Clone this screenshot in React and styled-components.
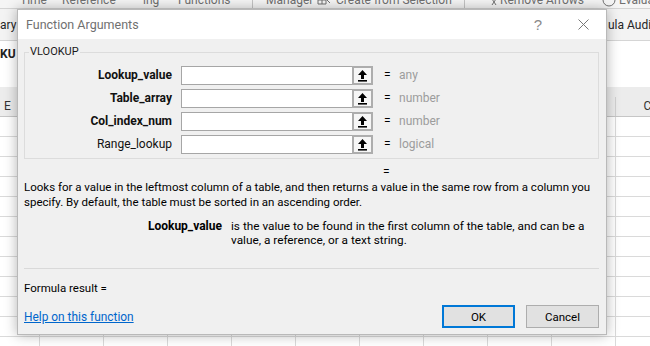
import React from "react";
import styled, { createGlobalStyle } from "styled-components";

const GlobalStyle = createGlobalStyle`
  html, body {
    margin: 0;
    padding: 0;
  }
  body {
    width: 650px;
    height: 346px;
    overflow: hidden;
    background: #fff;
    font-family: Roboto, "Noto Sans", "Liberation Sans", sans-serif;
  }
`;

const Screen = styled.div`
  position: relative;
  width: 650px;
  height: 346px;
  overflow: hidden;
  background: #fff;
`;

/* ---------- excel behind the dialog ---------- */

const TabsStrip = styled.div`
  height: 8px;
  background: #f5f5f5;
  border-bottom: 1px solid #d4d4d4;
  display: flex;
  align-items: flex-end;
  overflow: hidden;
  font-size: 12px;
  color: #707070;
`;

const StripItem = styled.div`
  flex-shrink: 0;
  width: ${(p) => p.$w}px;
  height: 16px;
  line-height: 16px;
  white-space: nowrap;
  display: flex;
  align-items: center;
`;

const StripDivider = styled.div`
  flex-shrink: 0;
  width: ${(p) => p.$w}px;
  height: 8px;
  border-left: 1px solid #c4c4c4;
  align-self: stretch;
`;

const RibbonBody = styled.div`
  height: 31px;
  background: #f3f3f3;
  border-bottom: 1px solid #d5d5d5;
  display: flex;
  align-items: center;
  justify-content: space-between;
  font-size: 12px;
  color: #262626;
`;

const RibbonText = styled.span`
  width: ${(p) => p.$w}px;
  overflow: hidden;
  white-space: nowrap;
`;

const FormulaRow = styled.div`
  height: 46px;
  box-sizing: border-box;
  padding-top: 5px;
  font-size: 12px;
  font-weight: 700;
  line-height: 16px;
  color: #222;
`;

const HeaderBand = styled.div`
  height: 30px;
  box-sizing: border-box;
  padding-top: 10px;
  background: #ececec;
  border-bottom: 1px solid #c6c6c6;
  overflow: hidden;
`;

const Track = styled.div`
  display: flex;
  margin-left: -24px;
  height: 100%;
`;

const HeadCell = styled.div`
  flex-shrink: 0;
  width: 64px;
  box-sizing: border-box;
  border-right: 1px solid #d0d0d0;
  text-align: center;
  font-size: 12px;
  line-height: 19px;
  color: #333;
`;

const SheetRow = styled.div`
  height: 20px;
  box-sizing: border-box;
  border-bottom: 1px solid #dadada;
  overflow: hidden;
`;

const SheetCell = styled.div`
  flex-shrink: 0;
  width: 64px;
  box-sizing: border-box;
  border-right: 1px solid #dadada;
`;

/* ---------- dialog ---------- */

const Dialog = styled.div`
  position: absolute;
  left: 17px;
  top: 9px;
  width: 590px;
  box-sizing: border-box;
  background: #f0f0f0;
  border: 1px solid #b9b9b9;
  box-shadow: 0 0 12px rgba(0, 0, 0, 0.3);
  color: #000;
`;

const TitleBar = styled.div`
  height: 29px;
  display: flex;
  align-items: center;
  background: #fff;
`;

const Title = styled.div`
  flex: 1;
  padding-left: 8px;
  font-size: 12.5px;
  color: #707070;
`;

const CaptionButton = styled.div`
  width: ${(p) => p.$w}px;
  height: 29px;
  display: flex;
  align-items: center;
  justify-content: center;
  font-family: "Liberation Sans", sans-serif;
  font-size: 15px;
  color: #8a8a8a;
`;

const Body = styled.div`
  padding: 0 7px 6px 6px;
  font-size: 11.5px;
`;

const ArgsBox = styled.fieldset`
  margin: 5px 0 0;
  padding: 6px 4px 4px;
  border: 1px solid #dcdcdc;
  min-width: 0;
`;

const BoxLegend = styled.legend`
  padding: 0 1px;
  font-size: 11px;
  line-height: 16px;
  color: #1a1a1a;
`;

const ArgGrid = styled.div`
  display: grid;
  grid-template-columns: 143px 192px 1fr;
  column-gap: 9px;
  row-gap: 4px;
`;

const ArgLabel = styled.div`
  text-align: right;
  font-size: 12px;
  line-height: 19px;
  font-weight: ${(p) => (p.$required ? 700 : 400)};
  color: #111;
`;

const RefInput = styled.div`
  display: flex;
  height: 19px;
`;

const Field = styled.input`
  flex: 1;
  min-width: 0;
  margin: 0;
  padding: 0 3px;
  box-sizing: border-box;
  height: 19px;
  border: 1px solid #a6a6a6;
  border-right: none;
  background: #fff;
  outline: none;
`;

const RefButton = styled.div`
  width: 21px;
  height: 19px;
  box-sizing: border-box;
  border: 2px solid #adadad;
  background: #f6f6f6;
  display: flex;
  align-items: center;
  justify-content: center;
`;

const ArgResult = styled.div`
  display: grid;
  grid-template-columns: 17px auto;
  font-size: 12px;
  line-height: 19px;
`;

const Eq = styled.span`
  padding-left: 2px;
  color: #000;
`;

const ArgType = styled.span`
  color: #9c9c9c;
`;

const ResultLine = styled.div`
  padding: 5px 0 0 359px;
  font-size: 12px;
  line-height: 16px;
`;

const Description = styled.p`
  margin: 0;
  line-height: 15px;
  white-space: nowrap;
`;

const ArgHelp = styled.div`
  margin-top: 9px;
  display: grid;
  grid-template-columns: 198px 1fr;
  column-gap: 9px;
  line-height: 14px;
`;

const ArgHelpName = styled.div`
  text-align: right;
  font-size: 12px;
  font-weight: 700;
`;

const ArgHelpText = styled.div`
  white-space: nowrap;
  font-size: 11.8px;
`;

const Separator = styled.div`
  margin-top: 21px;
  height: 1px;
  background: #d9d9d9;
`;

const FormulaResult = styled.div`
  margin-top: 11px;
  line-height: 16px;
`;

const Footer = styled.div`
  margin-top: 9px;
  display: flex;
  align-items: center;
  gap: 11px;
`;

const HelpLink = styled.a`
  flex: 1;
  color: #0066cc;
  text-decoration: underline;
  font-size: 11.9px;
  cursor: pointer;
`;

const DialogButton = styled.button`
  width: 73px;
  height: 23px;
  box-sizing: border-box;
  margin: 0;
  padding: 0;
  background: #e1e1e1;
  border: ${(p) => (p.$default ? "2px solid #0078d7" : "1px solid #adadad")};
  font-family: inherit;
  font-size: 11.5px;
  color: #000;
`;

const UpArrow = () => (
  <svg width="9" height="12" viewBox="0 0 9 12">
    <path d="M4.5 0 L9 5 H6 V9 H3 V5 H0 Z" fill="#000" />
    <rect x="0" y="10" width="9" height="1.6" fill="#000" />
  </svg>
);

const CloseGlyph = () => (
  <svg width="11" height="11" viewBox="0 0 11 11">
    <path d="M0.5 0.5 L10.5 10.5 M10.5 0.5 L0.5 10.5" stroke="#777" strokeWidth="1" />
  </svg>
);

const SmallIcon = ({ kind }) => (
  <svg width="14" height="14" viewBox="0 0 14 14">
    {kind === "grid" && (
      <path d="M1 3h8v8H1z M1 7h8 M5 3v8 M9 6l4 4" fill="none" stroke="#707070" strokeWidth="1" />
    )}
    {kind === "arrows" && (
      <path d="M1 2l5 5 M6 2l-5 5 M9 6l4 6 M13 6l-4 6" fill="none" stroke="#707070" strokeWidth="1" />
    )}
    {kind === "eval" && (
      <circle cx="7" cy="7" r="6" fill="none" stroke="#707070" strokeWidth="1" />
    )}
  </svg>
);

const args = [
  { name: "Lookup_value", type: "any", required: true },
  { name: "Table_array", type: "number", required: true },
  { name: "Col_index_num", type: "number", required: true },
  { name: "Range_lookup", type: "logical", required: false },
];

const headers = ["E", "", "", "", "", "", "", "", "", "", "C"];
const rows = Array.from({ length: 12 }, (_, i) => i);

export default function App() {
  return (
    <Screen>
      <GlobalStyle />

      <TabsStrip>
        <StripItem $w={20} />
        <StripItem $w={42}>Time</StripItem>
        <StripItem $w={81}>Reference</StripItem>
        <StripItem $w={35}>ing</StripItem>
        <StripItem $w={74}>Functions</StripItem>
        <StripDivider $w={13} />
        <StripItem $w={51}>Manager</StripItem>
        <StripItem $w={19}>
          <SmallIcon kind="grid" />
        </StripItem>
        <StripItem $w={128}>Create from Selection</StripItem>
        <StripDivider $w={18} />
        <StripItem $w={17}>
          <SmallIcon kind="arrows" />
        </StripItem>
        <StripItem $w={102}>Remove Arrows</StripItem>
        <StripItem $w={17}>
          <SmallIcon kind="eval" />
        </StripItem>
        <StripItem $w={60}>Evaluate Formula</StripItem>
      </TabsStrip>

      <RibbonBody>
        <RibbonText $w={17}>ary</RibbonText>
        <RibbonText $w={42}>ula Auditing</RibbonText>
      </RibbonBody>

      <FormulaRow>KU</FormulaRow>

      <HeaderBand>
        <Track>
          {headers.map((h, i) => (
            <HeadCell key={i}>{h}</HeadCell>
          ))}
        </Track>
      </HeaderBand>

      {rows.map((r) => (
        <SheetRow key={r}>
          <Track>
            {headers.map((_, i) => (
              <SheetCell key={i} />
            ))}
          </Track>
        </SheetRow>
      ))}

      <Dialog>
        <TitleBar>
          <Title>Function Arguments</Title>
          <CaptionButton $w={44}>?</CaptionButton>
          <CaptionButton $w={46}>
            <CloseGlyph />
          </CaptionButton>
        </TitleBar>

        <Body>
          <ArgsBox>
            <BoxLegend>VLOOKUP</BoxLegend>
            <ArgGrid>
              {args.map((a) => (
                <React.Fragment key={a.name}>
                  <ArgLabel $required={a.required}>{a.name}</ArgLabel>
                  <RefInput>
                    <Field type="text" />
                    <RefButton>
                      <UpArrow />
                    </RefButton>
                  </RefInput>
                  <ArgResult>
                    <Eq>=</Eq>
                    <ArgType>{a.type}</ArgType>
                  </ArgResult>
                </React.Fragment>
              ))}
            </ArgGrid>
          </ArgsBox>

          <ResultLine>=</ResultLine>

          <Description>
            Looks for a value in the leftmost column of a table, and then returns a value in the same row from a column you
            <br />
            specify. By default, the table must be sorted in an ascending order.
          </Description>

          <ArgHelp>
            <ArgHelpName>Lookup_value</ArgHelpName>
            <ArgHelpText>
              is the value to be found in the first column of the table, and can be a
              <br />
              value, a reference, or a text string.
            </ArgHelpText>
          </ArgHelp>

          <Separator />

          <FormulaResult>Formula result =</FormulaResult>

          <Footer>
            <HelpLink>Help on this function</HelpLink>
            <DialogButton $default>OK</DialogButton>
            <DialogButton>Cancel</DialogButton>
          </Footer>
        </Body>
      </Dialog>
    </Screen>
  );
}
